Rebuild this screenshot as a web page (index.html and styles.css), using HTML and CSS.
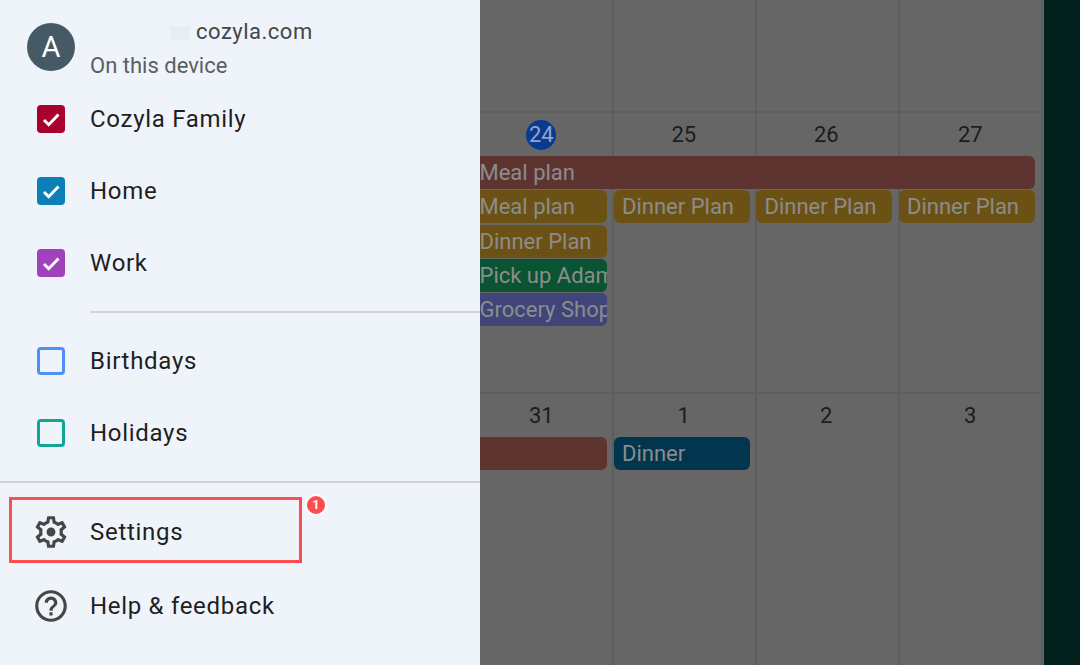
FILE: index.html
```html
<!DOCTYPE html>
<html lang="en">
<head>
    <meta charset="UTF-8">
    <meta name="viewport" content="width=device-width, initial-scale=1.0">
    <title>Calendar menu</title>
    <link rel="stylesheet" href="styles.css">
</head>
<body>
    <div class="screen">
        <nav class="drawer">
            <div class="account">
                <div class="avatar">A</div>
                <div class="account-text">
                    <div class="email"><span class="smudge"></span>cozyla.com</div>
                    <div class="device">On this device</div>
                </div>
            </div>

            <ul class="cal-list">
                <li class="item"><span class="check red"><svg viewBox="0 0 28 28"><path d="M7 15l4.7 4.7L21.5 9.5"/></svg></span>Cozyla Family</li>
                <li class="item"><span class="check blue"><svg viewBox="0 0 28 28"><path d="M7 15l4.7 4.7L21.5 9.5"/></svg></span>Home</li>
                <li class="item"><span class="check purple"><svg viewBox="0 0 28 28"><path d="M7 15l4.7 4.7L21.5 9.5"/></svg></span>Work</li>
            </ul>
            <hr class="rule inset">
            <ul class="cal-list second">
                <li class="item"><span class="check outline-blue"></span>Birthdays</li>
                <li class="item"><span class="check outline-teal"></span>Holidays</li>
            </ul>
            <hr class="rule full">

            <div class="action settings">
                <svg class="action-icon" viewBox="0 0 24 24"><path d="M19.43 12.98c.04-.32.07-.64.07-.98 0-.34-.03-.66-.07-.98l2.11-1.65c.19-.15.24-.42.12-.64l-2-3.46c-.09-.16-.26-.25-.44-.25-.06 0-.12.01-.17.03l-2.49 1c-.52-.4-1.08-.73-1.69-.98l-.38-2.65C14.46 2.18 14.25 2 14 2h-4c-.25 0-.46.18-.49.42l-.38 2.65c-.61.25-1.17.59-1.69.98l-2.49-1c-.06-.02-.12-.03-.18-.03-.17 0-.34.09-.43.25l-2 3.46c-.13.22-.07.49.12.64l2.11 1.65c-.04.32-.07.65-.07.98 0 .33.03.66.07.98l-2.11 1.65c-.19.15-.24.42-.12.64l2 3.46c.09.16.26.25.44.25.06 0 .12-.01.17-.03l2.49-1c.52.4 1.08.73 1.69.98l.38 2.65c.03.24.24.42.49.42h4c.25 0 .46-.18.49-.42l.38-2.65c.61-.25 1.17-.59 1.69-.98l2.49 1c.06.02.12.03.18.03.17 0 .34-.09.43-.25l2-3.46c.12-.22.07-.49-.12-.64l-2.11-1.65zm-1.98-1.71c.04.31.05.52.05.73 0 .21-.02.43-.05.73l-.14 1.13.89.7 1.08.84-.7 1.21-1.27-.51-1.04-.42-.9.68c-.43.32-.84.56-1.25.73l-1.06.43-.16 1.13-.2 1.35h-1.4l-.19-1.35-.16-1.13-1.06-.43c-.43-.18-.83-.41-1.23-.71l-.91-.7-1.06.43-1.27.51-.7-1.21 1.08-.84.89-.7-.14-1.13c-.03-.31-.05-.54-.05-.74s.02-.43.05-.73l.14-1.13-.89-.7-1.08-.84.7-1.21 1.27.51 1.04.42.9-.68c.43-.32.84-.56 1.25-.73l1.06-.43.16-1.13.2-1.35h1.39l.19 1.35.16 1.13 1.06.43c.43.18.83.41 1.23.71l.91.7 1.06-.43 1.27-.51.7 1.21-1.07.85-.89.7.14 1.13zM12 9.2a2.8 2.8 0 1 0 0 5.6 2.8 2.8 0 0 0 0-5.6z"/></svg>
                Settings
                <span class="highlight"></span>
                <span class="badge">1</span>
            </div>
            <div class="action help">
                <svg class="action-icon" viewBox="0 0 24 24"><path d="M11 18h2v-2h-2v2zm1-16C6.48 2 2 6.48 2 12s4.48 10 10 10 10-4.48 10-10S17.52 2 12 2zm0 18c-4.41 0-8-3.59-8-8s3.59-8 8-8 8 3.59 8 8-3.59 8-8 8zm0-14c-2.21 0-4 1.79-4 4h2c0-1.1.9-2 2-2s2 .9 2 2c0 2-3 1.75-3 5h2c0-2.25 3-2.5 3-5 0-2.21-1.79-4-4-4z"/></svg>
                Help &amp; feedback
            </div>
        </nav>

        <main class="calendar">
            <div class="week empty"></div>
            <div class="week">
                <div class="date"><span class="today">24</span></div>
                <div class="date">25</div>
                <div class="date">26</div>
                <div class="date">27</div>
                <div class="chip brick span-all">Meal plan</div>
                <div class="chip amber">Meal plan</div>
                <div class="chip amber">Dinner Plan</div>
                <div class="chip amber">Dinner Plan</div>
                <div class="chip amber last">Dinner Plan</div>
                <div class="chip amber first">Dinner Plan</div>
                <div class="chip green first">Pick up Adam</div>
                <div class="chip indigo first">Grocery Shopping</div>
            </div>
            <div class="week">
                <div class="date">31</div>
                <div class="date">1</div>
                <div class="date">2</div>
                <div class="date">3</div>
                <div class="chip brick"></div>
                <div class="chip navy">Dinner</div>
            </div>
        </main>

        <div class="edge"></div>
    </div>
</body>
</html>
```

FILE: styles.css
```css
* {
    margin: 0;
    padding: 0;
    box-sizing: border-box;
}

body {
    font-family: Roboto, 'Noto Sans', sans-serif;
    background: #666;
}

.screen {
    display: flex;
    width: 1080px;
    height: 665px;
    overflow: hidden;
}

/* left menu */
.drawer {
    position: relative;
    z-index: 1;
    flex: none;
    width: 480px;
    background: #eff4fb;
    color: #1f1f1f;
}

.account {
    display: flex;
    height: 83px;
    padding: 23px 0 0 27px;
}

.avatar {
    width: 48px;
    height: 48px;
    border-radius: 50%;
    background: #455a64;
    color: white;
    font-size: 29px;
    line-height: 48px;
    text-align: center;
}

.account-text {
    margin-left: 15px;
    margin-top: -6px;
}

.email {
    display: flex;
    align-items: center;
    height: 28px;
    padding-left: 80px;
    font-size: 22px;
    letter-spacing: 0.5px;
    color: #444746;
}

.smudge {
    width: 20px;
    height: 14px;
    margin-right: 6px;
    margin-top: 4px;
    background: #e8edf5;
}

.device {
    margin-top: 8px;
    font-size: 22px;
    line-height: 26px;
    color: #5a5e60;
}

.cal-list {
    list-style: none;
}

.item {
    display: flex;
    align-items: center;
    height: 72px;
    padding-left: 37px;
    font-size: 24px;
    letter-spacing: 0.7px;
}

.check {
    flex: none;
    width: 28px;
    height: 28px;
    margin-right: 25px;
    border-radius: 4px;
}

.check svg {
    display: block;
    fill: none;
    stroke: white;
    stroke-width: 3;
}

.red { background: #a8002f; }
.blue { background: #0a7fb8; }
.purple { background: #a142bd; }
.outline-blue { border: 3px solid #4f8ff7; }
.outline-teal { border: 3px solid #12a594; }

.rule {
    border: none;
    height: 2px;
    background: #cfd2d6;
}

.rule.inset {
    margin: 12px 0 0 90px;
}

.rule.full {
    margin-top: 12px;
}

.second {
    margin-top: 12px;
}

.action {
    position: relative;
    display: flex;
    align-items: center;
    height: 74px;
    padding-left: 32px;
    font-size: 24px;
    letter-spacing: 0.7px;
}

.settings {
    margin-top: 12px;
}

.action-icon {
    flex: none;
    width: 38px;
    height: 38px;
    margin-right: 20px;
    fill: #444746;
}

/* annotation drawn on top of the screenshot */
.highlight {
    position: absolute;
    left: 9px;
    top: 2px;
    width: 293px;
    height: 66px;
    border: 3px solid #ff4d4f;
}

.badge {
    position: absolute;
    left: 305px;
    top: -1px;
    width: 22px;
    height: 22px;
    border: 2px solid white;
    border-radius: 50%;
    background: #ff4d4f;
    color: white;
    font-size: 12px;
    font-weight: 700;
    letter-spacing: 0;
    line-height: 18px;
    text-align: center;
}

/* dimmed calendar behind the menu */
.calendar {
    flex: 1;
    margin-left: -9px;
    display: grid;
    grid-template-rows: 111px 281px 1fr;
    background: repeating-linear-gradient(90deg, transparent 0, transparent 141px, #5d5d5d 141px, #5d5d5d 143px) #666;
}

.week {
    display: grid;
    grid-template-columns: repeat(3, 142.5px) 1fr;
    grid-template-rows: 41.7px;
    grid-auto-rows: 33px;
    row-gap: 1.3px;
    align-content: start;
    border-top: 2px solid #5e5e5e;
}

.week.empty {
    border-top: none;
}

.date {
    padding: 9px 2px 0 0;
    font-size: 22px;
    line-height: 26px;
    text-align: center;
    color: #1c1c1c;
}

.today {
    display: inline-block;
    width: 30px;
    height: 30px;
    margin-top: -2px;
    border-radius: 50%;
    background: #093a8e;
    color: #93a5c6;
    line-height: 30px;
}

.chip {
    min-width: 0;
    margin-right: 6.5px;
    padding-left: 8.5px;
    border-radius: 6px;
    font-size: 22px;
    line-height: 33px;
    white-space: nowrap;
    overflow: hidden;
    color: #8c8c8c;
}

.span-all { grid-column: 1 / -1; margin-right: 9px; }
.first { grid-column: 1; }
.last { margin-right: 9px; }

.brick { background: #5e3431; }
.amber { background: #6b5214; }
.green { background: #0a5433; }
.indigo { background: #3f4578; }
.navy { background: #02364f; }

.edge {
    flex: none;
    width: 36px;
    background: #03211c;
}
```
